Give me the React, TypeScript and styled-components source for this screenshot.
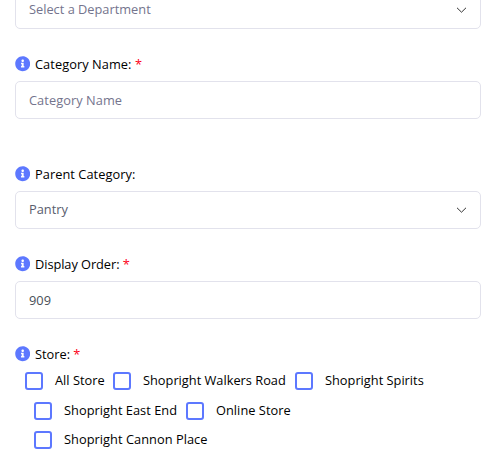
import React from 'react';
import styled, { createGlobalStyle } from 'styled-components';

const GlobalStyle = createGlobalStyle`
  *, *::before, *::after { box-sizing: border-box; }
  html, body { margin: 0; background: #fff; overflow: hidden; }
`;

const Form = styled.form`
  display: flex;
  flex-direction: column;
  width: 496px;
  height: 460px;
  padding: 0 15px;
  overflow: hidden;
  background: #fff;
  font: 400 12.8px/20px 'Open Sans', sans-serif;
  color: #000;
`;

const Field = styled.div<{ $gap: number }>`
  display: flex;
  flex-direction: column;
  flex: none;
  margin-top: ${p => p.$gap}px;
`;

const Label = styled.label<{ $space?: number; $tracking?: number }>`
  display: flex;
  align-items: center;
  height: 20px;
  margin-bottom: ${p => p.$space ?? 7}px;
  white-space: pre;
  letter-spacing: ${p => p.$tracking ?? 0}px;
`;

const InfoSvg = styled.svg`
  width: 15.4px;
  height: 15.4px;
  margin-right: 4.6px;
`;

const Required = styled.span`
  color: #fd0018;
`;

const Control = styled.div<{ $cut?: boolean; $select?: boolean; $color: string; $tracking?: number }>`
  display: flex;
  align-items: center;
  justify-content: space-between;
  width: 466px;
  height: 38px;
  margin-top: ${p => (p.$cut ? -9 : 0)}px;
  padding: 0 13px ${p => (p.$select ? 2 : 0)}px;
  border: 1px solid #e2e2ec;
  border-radius: 5px;
  color: ${p => p.$color};
  letter-spacing: ${p => p.$tracking ?? 0}px;
`;

const Chevron = styled.svg`
  width: 11px;
  height: 6px;
  margin-top: 2px;
`;

const StoreRow = styled.div<{ $indent: number; $height: number; $tracking?: number }>`
  display: flex;
  align-items: center;
  height: ${p => p.$height}px;
  padding-left: ${p => p.$indent}px;
  letter-spacing: ${p => p.$tracking ?? 0}px;
`;

const Option = styled.label<{ $width?: number }>`
  display: flex;
  align-items: center;
  flex: none;
  width: ${p => (p.$width ? `${p.$width}px` : 'auto')};
  white-space: nowrap;
`;

const OptionText = styled.span`
  padding-bottom: 2px;
`;

const Box = styled.span`
  flex: none;
  width: 18px;
  height: 18px;
  margin-right: 12px;
  border: 2px solid #5d78ff;
  border-radius: 3px;
`;

function Info() {
  return (
    <InfoSvg viewBox="0 0 512 512">
      <path
        fill="#5d78ff"
        d="M256 8C119.043 8 8 119.083 8 256c0 136.997 111.043 248 248 248s248-111.003 248-248C504 119.083 392.957 8 256 8zm0 110c23.196 0 42 18.804 42 42s-18.804 42-42 42-42-18.804-42-42 18.804-42 42-42zm56 254c0 6.627-5.373 12-12 12h-88c-6.627 0-12-5.373-12-12v-24c0-6.627 5.373-12 12-12h12v-64h-12c-6.627 0-12-5.373-12-12v-24c0-6.627 5.373-12 12-12h64c6.627 0 12 5.373 12 12v100h12c6.627 0 12 5.373 12 12v24z"
      />
    </InfoSvg>
  );
}

function Arrow() {
  return (
    <Chevron viewBox="0 0 11 6" fill="none" stroke="#333" strokeWidth="1">
      <path d="M1 .8 5.5 5.2 10 .8" />
    </Chevron>
  );
}

type FieldLabelProps = { text: string; required?: boolean; space?: number; tracking?: number };

function FieldLabel({ text, required, space, tracking }: FieldLabelProps) {
  return (
    <Label $space={space} $tracking={tracking}>
      <Info />
      {text}
      {required && <Required> *</Required>}
    </Label>
  );
}

type Store = { name: string; width?: number };
const rows: { indent: number; height: number; tracking?: number; stores: Store[] }[] = [
  { indent: 10, height: 30, stores: [{ name: 'All Store', width: 88 }, { name: 'Shopright Walkers Road', width: 182 }, { name: 'Shopright Spirits' }] },
  { indent: 19, height: 30, tracking: 0.03, stores: [{ name: 'Shopright East End', width: 152 }, { name: 'Online Store' }] },
  { indent: 19, height: 28, tracking: 0.04, stores: [{ name: 'Shopright Cannon Place' }] },
];

export default function App() {
  return (
    <>
      <GlobalStyle />
      <Form>
        <Field $gap={0}>
          <Control $cut $select $color="#74748d">Select a Department<Arrow /></Control>
        </Field>
        <Field $gap={25}>
          <FieldLabel text="Category Name:" required tracking={0.06} />
          <Control $color="#74748d" $tracking={0.06}>Category Name</Control>
        </Field>
        <Field $gap={45}>
          <FieldLabel text="Parent Category:" tracking={0.05} />
          <Control $select $color="#595d6e">Pantry<Arrow /></Control>
        </Field>
        <Field $gap={25}>
          <FieldLabel text="Display Order:" required tracking={-0.06} />
          <Control $color="#495057">909</Control>
        </Field>
        <Field $gap={25}>
          <FieldLabel text="Store:" required space={2} />
          {rows.map(row => (
            <StoreRow key={row.stores[0].name} $indent={row.indent} $height={row.height} $tracking={row.tracking}>
              {row.stores.map(s => (
                <Option key={s.name} $width={s.width}>
                  <Box />
                  <OptionText>{s.name}</OptionText>
                </Option>
              ))}
            </StoreRow>
          ))}
        </Field>
      </Form>
    </>
  );
}
